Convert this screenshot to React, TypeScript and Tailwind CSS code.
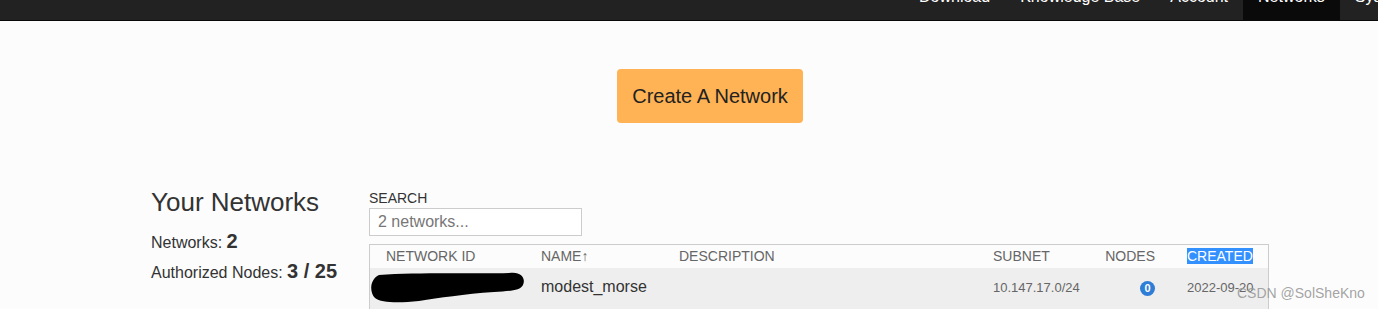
import React from 'react';

const navItems = ['Download', 'Knowledge Base', 'Account', 'Networks', 'System'];

const TopNav: React.FC = () => {
  return (
    <div className="h-[21px] bg-[#222222] border-b border-[#080808] overflow-hidden">
      <div className="flex ml-[904px] h-[20px]">
        {navItems.map((item) => (
          <div
            key={item}
            className={`px-[15px] h-[20px] whitespace-nowrap ${item === 'Networks' ? 'bg-[#0a0a0a]' : ''}`}
          >
            <div className="-mt-[13px] text-[16px] leading-[20px] text-white">{item}</div>
          </div>
        ))}
      </div>
    </div>
  );
};

// marker scribble hiding the network id
const Redaction: React.FC = () => (
  <svg width="158" height="34" viewBox="0 0 158 34" className="self-start -mt-[7px] -ml-[17px]">
    <path
      d="M10 5 C50 2, 110 4, 140 3 C152 1, 157 8, 154 15 C151 21, 140 21, 125 22 C95 24, 70 28, 50 31 C30 33, 12 33, 6 28 C0 22, 1 9, 10 5 Z"
      fill="#000"
    />
  </svg>
);

const App: React.FC = () => {
  return (
    <div className="min-h-screen bg-[#fcfcfc] text-[#333] font-['Liberation_Sans',Arial,sans-serif] relative overflow-hidden">
      <TopNav />

      <div className="w-[1118px] ml-[151px]">
        <div className="flex justify-center pt-[48px]">
          <button className="w-[186px] h-[54px] rounded-[4px] bg-[#ffb354] text-[20px] text-[#222]">
            Create A Network
          </button>
        </div>

        <div className="flex mt-[64px]">
          {/* Summary */}
          <div className="w-[218px]">
            <h2 className="text-[26px] leading-[30px]">Your Networks</h2>
            <div className="mt-[14px] text-[16px] leading-[22px]">
              Networks: <span className="text-[20px] font-bold leading-none">2</span>
            </div>
            <div className="mt-[7px] text-[16px] leading-[22px]">
              Authorized Nodes: <span className="text-[20px] font-bold leading-none">3 / 25</span>
            </div>
          </div>

          {/* Network table */}
          <div className="w-[900px] pt-[3px]">
            <div className="text-[14px] leading-[16px]">SEARCH</div>
            <input
              className="mt-[2px] w-[213px] h-[28px] border border-[#cccccc] px-[8px] text-[16px] bg-white outline-none placeholder:text-[#777]"
              placeholder="2 networks..."
            />
            <div className="mt-[8px] border-t border-x border-[#cccccc]">
              <div className="grid grid-cols-[155px_138px_314px_112px_82px_1fr] pl-[16px] h-[23px] pt-[1px] text-[14px] leading-[20px] text-[#666] items-baseline">
                <div>NETWORK ID</div>
                <div>NAME↑</div>
                <div>DESCRIPTION</div>
                <div>SUBNET</div>
                <div className="text-right pr-[32px]">NODES</div>
                <div>
                  <span className="bg-[#3390ff] text-white">CREATED</span>
                </div>
              </div>
              <div className="grid grid-cols-[155px_138px_314px_112px_82px_1fr] pl-[16px] h-[48px] pt-[9px] bg-[#eeeeee] items-baseline leading-[20px]">
                <Redaction />
                <div className="text-[16px] text-[#333]">modest_morse</div>
                <div />
                <div className="text-[13px] text-[#666]">10.147.17.0/24</div>
                <div className="text-right pr-[32px] text-[13px]">
                  <span className="inline-flex items-center justify-center w-[15px] h-[15px] rounded-full bg-[#2e7dd7] text-white text-[11px] font-bold leading-none">
                    0
                  </span>
                </div>
                <div className="text-[13px] text-[#666]">2022-09-20</div>
              </div>
            </div>
          </div>
        </div>
      </div>

      <div className="absolute left-[1237px] top-[285px] text-[14px] leading-[16px] text-[#999]/90 whitespace-nowrap">
        CSDN @SolSheKno
      </div>
    </div>
  );
};

export default App;
